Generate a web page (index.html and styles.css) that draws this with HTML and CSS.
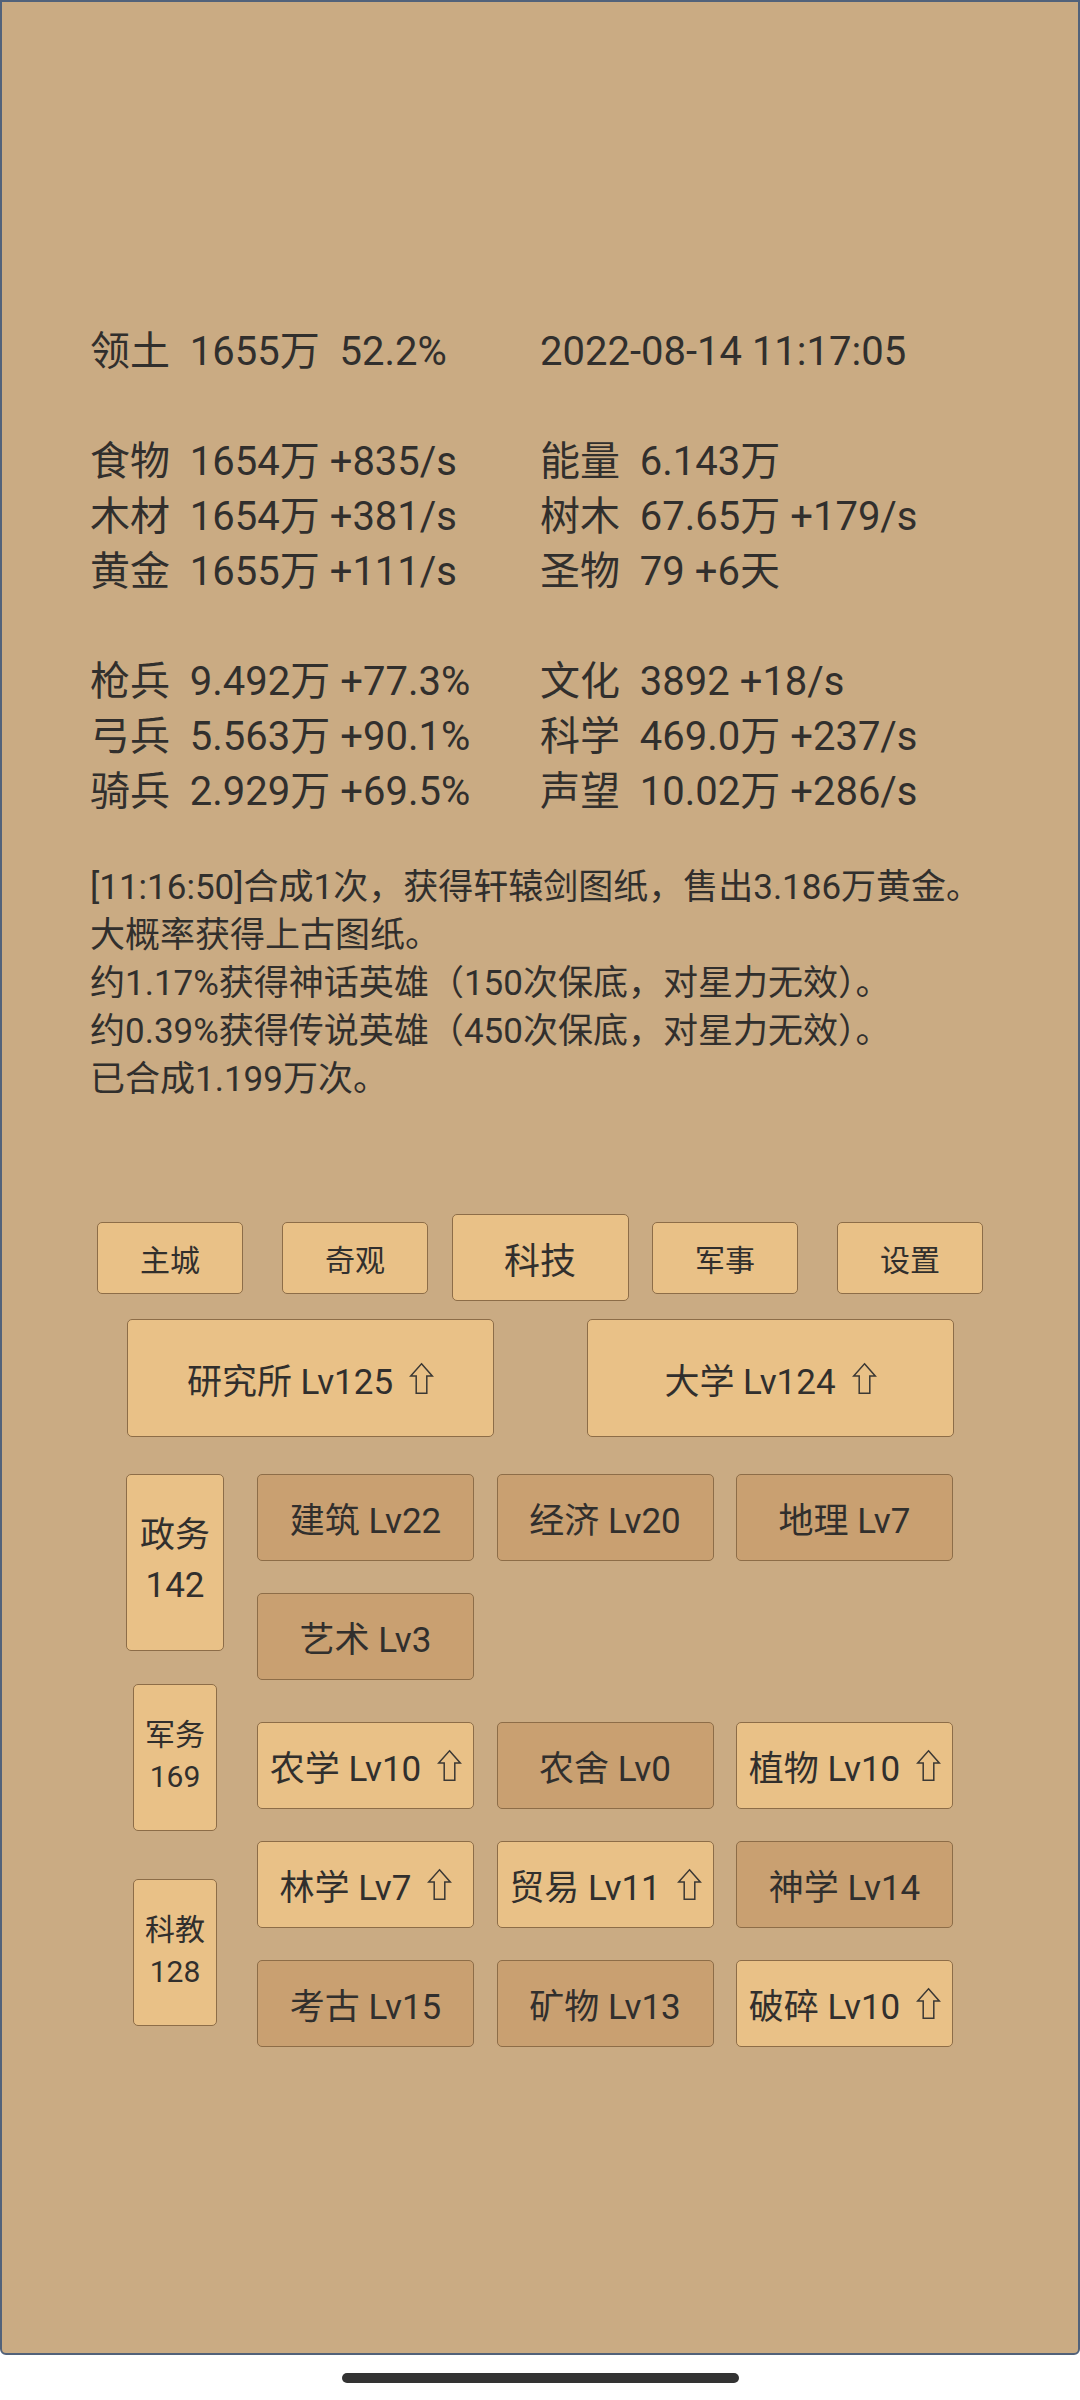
FILE: index.html
```html
<!DOCTYPE html>
<html lang="zh-CN">
<head>
<meta charset="utf-8">
<title>科技</title>
<link rel="stylesheet" href="styles.css">
</head>
<body>
<div class="screen">
  <div class="stats">
    <div class="stat-row"><span>领土  1655万  52.2%</span><span>2022-08-14 11:17:05</span></div>
    <div class="stat-gap"></div>
    <div class="stat-row"><span>食物  1654万 +835/s</span><span>能量  6.143万</span></div>
    <div class="stat-row"><span>木材  1654万 +381/s</span><span>树木  67.65万 +179/s</span></div>
    <div class="stat-row"><span>黄金  1655万 +111/s</span><span>圣物  79 +6天</span></div>
    <div class="stat-gap"></div>
    <div class="stat-row"><span>枪兵  9.492万 +77.3%</span><span>文化  3892 +18/s</span></div>
    <div class="stat-row"><span>弓兵  5.563万 +90.1%</span><span>科学  469.0万 +237/s</span></div>
    <div class="stat-row"><span>骑兵  2.929万 +69.5%</span><span>声望  10.02万 +286/s</span></div>
  </div>

  <div class="log">
    <div>[11:16:50]合成1次，获得轩辕剑图纸，售出3.186万黄金。</div>
    <div>大概率获得上古图纸。</div>
    <div>约1.17%获得神话英雄（150次保底，对星力无效）。</div>
    <div>约0.39%获得传说英雄（450次保底，对星力无效）。</div>
    <div>已合成1.199万次。</div>
  </div>

  <nav class="nav">
    <div class="btn nav-btn">主城</div>
    <div class="btn nav-btn">奇观</div>
    <div class="btn nav-btn active">科技</div>
    <div class="btn nav-btn">军事</div>
    <div class="btn nav-btn">设置</div>
  </nav>

  <div class="big-row">
    <div class="btn big-btn">研究所 Lv125<svg class="up" viewBox="0 0 23 31"><path d="M11.5 0.8 L22.3 13 L16.8 13 L16.8 30.3 L6.2 30.3 L6.2 13 L0.7 13 Z"/></svg></div>
    <div class="btn big-btn">大学 Lv124<svg class="up" viewBox="0 0 23 31"><path d="M11.5 0.8 L22.3 13 L16.8 13 L16.8 30.3 L6.2 30.3 L6.2 13 L0.7 13 Z"/></svg></div>
  </div>

  <div class="tech">
    <section class="sect sect-a">
      <div class="side"><div class="btn side-btn side-big">政务<br>142</div></div>
      <div class="cards">
        <div class="btn card dark">建筑 Lv22</div>
        <div class="btn card dark">经济 Lv20</div>
        <div class="btn card dark">地理 Lv7</div>
        <div class="btn card dark">艺术 Lv3</div>
      </div>
    </section>
    <section class="sect sect-b">
      <div class="side"><div class="btn side-btn">军务<br>169</div></div>
      <div class="cards">
        <div class="btn card">农学 Lv10<svg class="up" viewBox="0 0 23 31"><path d="M11.5 0.8 L22.3 13 L16.8 13 L16.8 30.3 L6.2 30.3 L6.2 13 L0.7 13 Z"/></svg></div>
        <div class="btn card dark">农舍 Lv0</div>
        <div class="btn card">植物 Lv10<svg class="up" viewBox="0 0 23 31"><path d="M11.5 0.8 L22.3 13 L16.8 13 L16.8 30.3 L6.2 30.3 L6.2 13 L0.7 13 Z"/></svg></div>
      </div>
    </section>
    <section class="sect sect-c">
      <div class="side"><div class="btn side-btn">科教<br>128</div></div>
      <div class="cards">
        <div class="btn card">林学 Lv7<svg class="up" viewBox="0 0 23 31"><path d="M11.5 0.8 L22.3 13 L16.8 13 L16.8 30.3 L6.2 30.3 L6.2 13 L0.7 13 Z"/></svg></div>
        <div class="btn card">贸易 Lv11<svg class="up" viewBox="0 0 23 31"><path d="M11.5 0.8 L22.3 13 L16.8 13 L16.8 30.3 L6.2 30.3 L6.2 13 L0.7 13 Z"/></svg></div>
        <div class="btn card dark">神学 Lv14</div>
        <div class="btn card dark">考古 Lv15</div>
        <div class="btn card dark">矿物 Lv13</div>
        <div class="btn card">破碎 Lv10<svg class="up" viewBox="0 0 23 31"><path d="M11.5 0.8 L22.3 13 L16.8 13 L16.8 30.3 L6.2 30.3 L6.2 13 L0.7 13 Z"/></svg></div>
      </div>
    </section>
  </div>
</div>
<div class="home-area"><div class="home-bar"></div></div>
</body>
</html>
```

FILE: styles.css
```css
html, body {
  margin: 0;
  padding: 0;
  background: #ffffff;
}

body {
  width: 1080px;
  font-family: Roboto, "Noto Sans CJK SC", sans-serif;
  color: #312f2d;
}

.screen {
  box-sizing: border-box;
  width: 1080px;
  height: 2355px;
  background: #caab83;
  border: 2px solid #52627a;
  border-radius: 0 0 6px 6px;
  padding-top: 322px;
  overflow: hidden;
}

/* stats */
.stats {
  padding-left: 88px;
  font-size: 40px;
  line-height: 55px;
}

.stat-row {
  display: grid;
  grid-template-columns: 450px 1fr;
  white-space: pre;
}

.stat-gap {
  height: 55px;
}

/* log */
.log {
  margin-top: 45px;
  padding-left: 88px;
  font-size: 35px;
  line-height: 48px;
  white-space: nowrap;
}

/* generic button */
.btn {
  box-sizing: border-box;
  display: flex;
  align-items: center;
  justify-content: center;
  background: #e9c187;
  border: 1.5px solid #8d6d48;
  border-radius: 5px;
  color: #312f2d;
  white-space: nowrap;
}

.btn.dark {
  background: #c9a071;
}

/* nav */
.nav {
  margin-top: 110px;
  display: grid;
  grid-template-columns: repeat(5, 185px);
  justify-content: center;
  justify-items: center;
  align-items: center;
  height: 87px;
}

.nav-btn {
  width: 146px;
  height: 72px;
  font-size: 30px;
}

.nav-btn.active {
  width: 177px;
  height: 87px;
  font-size: 36px;
}

/* big buttons */
.big-row {
  margin-top: 18px;
  display: flex;
  justify-content: center;
  gap: 93px;
}

.big-btn {
  width: 367px;
  height: 118px;
  font-size: 35px;
}

.up {
  flex: none;
  width: 23px;
  height: 31px;
  margin-left: 17px;
  align-self: center;
  overflow: visible;
}

.up path {
  fill: none;
  stroke: #3b3834;
  stroke-width: 1.5;
  stroke-linejoin: miter;
}

/* tech area */
.tech {
  margin-top: 37px;
}

.sect {
  display: flex;
  align-items: flex-start;
  padding-left: 124px;
}

.side {
  width: 98px;
  display: flex;
  justify-content: center;
  margin-right: 33px;
}

.side-btn {
  width: 84px;
  height: 147px;
  font-size: 30px;
  line-height: 42px;
  text-align: center;
  padding-bottom: 4px;
}

.side-btn.side-big {
  width: 98px;
  height: 177px;
  font-size: 35px;
  line-height: 50px;
}

.cards {
  display: grid;
  grid-template-columns: repeat(3, 217px);
  column-gap: 22.5px;
  row-gap: 32px;
}

.card {
  height: 87px;
  font-size: 35px;
}

.sect-b {
  margin-top: 4px;
}

.sect-b .cards {
  margin-top: 38px;
}

.sect-c {
  margin-top: 10px;
}

.sect-c .side-btn {
  margin-top: 38px;
}

/* bottom gesture bar */
.home-area {
  height: 45px;
  display: flex;
  justify-content: center;
}

.home-bar {
  margin-top: 18px;
  width: 397px;
  height: 10px;
  border-radius: 5px;
  background: #333333;
}
```
